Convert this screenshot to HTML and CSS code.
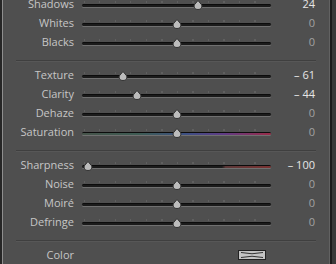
FILE: index.html
```html
<!DOCTYPE html>
<html lang="en">
<head>
    <meta charset="UTF-8">
    <meta name="viewport" content="width=device-width, initial-scale=1.0">
    <title>Detail</title>
    <link rel="stylesheet" href="styles.css">
</head>
<body>
    <div class="panel">
        <div class="group">
            <div class="row">
                <span class="label">Shadows</span>
                <div class="slider"><div class="track"></div><svg class="thumb" style="left:61.6%" viewBox="0 0 10 10"><path d="M5 0.5 L8.8 5 Q9.6 9.5 5 9.5 Q0.4 9.5 1.2 5 Z"/></svg></div>
                <span class="value on">24</span>
            </div>
            <div class="row">
                <span class="label">Whites</span>
                <div class="slider"><div class="track"></div><svg class="thumb" style="left:50%" viewBox="0 0 10 10"><path d="M5 0.5 L8.8 5 Q9.6 9.5 5 9.5 Q0.4 9.5 1.2 5 Z"/></svg></div>
                <span class="value">0</span>
            </div>
            <div class="row">
                <span class="label">Blacks</span>
                <div class="slider"><div class="track"></div><svg class="thumb" style="left:50%" viewBox="0 0 10 10"><path d="M5 0.5 L8.8 5 Q9.6 9.5 5 9.5 Q0.4 9.5 1.2 5 Z"/></svg></div>
                <span class="value">0</span>
            </div>
        </div>
        <div class="sep"></div>

        <div class="group">
            <div class="row">
                <span class="label">Texture</span>
                <div class="slider"><div class="track"></div><svg class="thumb" style="left:21.5%" viewBox="0 0 10 10"><path d="M5 0.5 L8.8 5 Q9.6 9.5 5 9.5 Q0.4 9.5 1.2 5 Z"/></svg></div>
                <span class="value on">&ndash; 61</span>
            </div>
            <div class="row">
                <span class="label">Clarity</span>
                <div class="slider"><div class="track"></div><svg class="thumb" style="left:29%" viewBox="0 0 10 10"><path d="M5 0.5 L8.8 5 Q9.6 9.5 5 9.5 Q0.4 9.5 1.2 5 Z"/></svg></div>
                <span class="value on">&ndash; 44</span>
            </div>
            <div class="row">
                <span class="label">Dehaze</span>
                <div class="slider"><div class="track"></div><svg class="thumb" style="left:50%" viewBox="0 0 10 10"><path d="M5 0.5 L8.8 5 Q9.6 9.5 5 9.5 Q0.4 9.5 1.2 5 Z"/></svg></div>
                <span class="value">0</span>
            </div>
            <div class="row">
                <span class="label">Saturation</span>
                <div class="slider"><div class="track sat"></div><svg class="thumb" style="left:50%" viewBox="0 0 10 10"><path d="M5 0.5 L8.8 5 Q9.6 9.5 5 9.5 Q0.4 9.5 1.2 5 Z"/></svg></div>
                <span class="value">0</span>
            </div>
        </div>
        <div class="sep"></div>

        <div class="group">
            <div class="row">
                <span class="label">Sharpness</span>
                <div class="slider"><div class="track sharp"></div><svg class="thumb" style="left:3.2%" viewBox="0 0 10 10"><path d="M5 0.5 L8.8 5 Q9.6 9.5 5 9.5 Q0.4 9.5 1.2 5 Z"/></svg></div>
                <span class="value on">&ndash; 100</span>
            </div>
            <div class="row">
                <span class="label">Noise</span>
                <div class="slider"><div class="track"></div><svg class="thumb" style="left:50%" viewBox="0 0 10 10"><path d="M5 0.5 L8.8 5 Q9.6 9.5 5 9.5 Q0.4 9.5 1.2 5 Z"/></svg></div>
                <span class="value">0</span>
            </div>
            <div class="row">
                <span class="label">Moiré</span>
                <div class="slider"><div class="track"></div><svg class="thumb" style="left:50%" viewBox="0 0 10 10"><path d="M5 0.5 L8.8 5 Q9.6 9.5 5 9.5 Q0.4 9.5 1.2 5 Z"/></svg></div>
                <span class="value">0</span>
            </div>
            <div class="row">
                <span class="label">Defringe</span>
                <div class="slider"><div class="track"></div><svg class="thumb" style="left:50%" viewBox="0 0 10 10"><path d="M5 0.5 L8.8 5 Q9.6 9.5 5 9.5 Q0.4 9.5 1.2 5 Z"/></svg></div>
                <span class="value">0</span>
            </div>
        </div>
        <div class="sep"></div>

        <div class="group">
            <div class="row">
                <span class="label">Color</span>
                <div class="swatch-cell">
                    <svg class="swatch" viewBox="0 0 28 10">
                        <rect x="0.5" y="0.5" width="27" height="9" fill="#c4c4c4" stroke="#222"/>
                        <path d="M3 2.5 Q14 5 25 2.5 M3 7.5 Q14 5 25 7.5" fill="none" stroke="#333" stroke-width="1"/>
                    </svg>
                </div>
                <span class="value"></span>
            </div>
        </div>
    </div>
</body>
</html>
```

FILE: styles.css
```css
body {
    margin: 0;
    background-color: #3a3a3a;
    font-family: "Open Sans", "Noto Sans", sans-serif;
    font-size: 11px;
    overflow: hidden;
}

.panel {
    width: 328px;
    height: 274px;
    margin-top: -10px;
    background-color: #4f4f4f;
    border-left: 2px solid #262626;
    border-right: 2px solid #1c1c1c;
    box-shadow: inset 1px 0 0 #8e8e8e, inset -1px 0 0 #626262;
}

.group {
    padding: 4px 0 9px;
}

.sep {
    height: 1px;
    width: 300px;
    margin-left: 14px;
    background-color: #3f3f3f;
    box-shadow: 0 1px 0 #575757;
}

.row {
    display: grid;
    grid-template-columns: 80px 189px 44px;
    align-items: center;
    height: 19px;
    line-height: 19px;
}

.label {
    padding-right: 8px;
    text-align: right;
    color: #c6c6c6;
}

.value {
    text-align: right;
    color: #a2a2a2;
}

.value.on {
    color: #e6e6e6;
}

.slider {
    position: relative;
    height: 19px;
}

/* tick marks sit just above the groove */
.slider::before {
    content: "";
    position: absolute;
    left: 2px;
    right: 2px;
    top: 7px;
    height: 2px;
    background: repeating-linear-gradient(to right, #5f5f5f 0 1px, transparent 1px 15.5px);
}

.track {
    position: absolute;
    left: 0;
    right: 0;
    top: 10px;
    height: 2px;
    border-top: 1px solid #0c0c0c;
    border-radius: 2px;
    background-color: #1b1b1b;
    box-shadow: 0 1px 0 #707070;
}

.track.sat {
    background: linear-gradient(to right, #46544a, #3e5c54 30%, #3d5084 55%, #603c86 75%, #9a2c48 100%);
}

.track.sharp {
    background: linear-gradient(to right, #1b1b1b 74%, #5b3838 76%, #7a3232 100%);
}

.thumb {
    position: absolute;
    top: 6px;
    width: 10px;
    height: 10px;
    margin-left: -5px;
    fill: #bcbcbc;
    stroke: #333;
    stroke-width: 1;
}

.swatch-cell {
    display: flex;
    justify-content: flex-end;
    padding-right: 5px;
    height: 19px;
    align-items: center;
}

.swatch {
    width: 28px;
    height: 10px;
}
```
